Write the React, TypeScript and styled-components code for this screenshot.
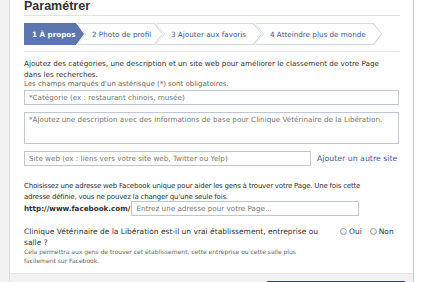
import React from "react";
import styled, { createGlobalStyle } from "styled-components";

const Global = createGlobalStyle`
  html, body { margin: 0; padding: 0; }
  body {
    background: #ffffff;
    font-family: "DejaVu Sans", "Liberation Sans", sans-serif;
    color: #333333;
    overflow: hidden;
  }
`;

const Page = styled.div`
  display: flex;
  width: 424px;
  height: 282px;
  overflow: hidden;
`;

const Gutter = styled.div`
  width: 9px;
  background: #f2f2f2;
  border-right: 1px solid #dcdcdc;
  flex: none;
`;

const Panel = styled.div`
  width: 403px;
  flex: none;
  background: #ffffff;
  border-right: 1px solid #c9c9c9;
  display: flex;
  flex-direction: column;
`;

const Content = styled.div`
  padding: 0 13px 0 14px;
  display: flex;
  flex-direction: column;
`;

const Title = styled.h1`
  margin: 0;
  font-family: "Liberation Sans", Arial, sans-serif;
  font-size: 12.5px;
  line-height: 12px;
  font-weight: bold;
  color: #333;
  padding-bottom: 3px;
  border-bottom: 1px solid #e2e2e2;
`;

const Tabs = styled.div`
  display: flex;
  margin-top: 7px;
  height: 22px;
  padding-bottom: 6px;
  border-bottom: 1px solid #e2e2e2;
`;

const chevron = (first: boolean) =>
  first
    ? "polygon(0 0, calc(100% - 8px) 0, 100% 50%, calc(100% - 8px) 100%, 0 100%)"
    : "polygon(0 0, calc(100% - 8px) 0, 100% 50%, calc(100% - 8px) 100%, 0 100%, 8px 50%)";

const TabOuter = styled.div<{ $first: boolean; $active: boolean; $w: number }>`
  width: ${(p) => p.$w}px;
  flex: none;
  height: 22px;
  padding: 1px 1px 1px ${(p) => (p.$first ? "0" : "1px")};
  box-sizing: border-box;
  margin-left: ${(p) => (p.$first ? "0" : "-7px")};
  background: ${(p) => (p.$active ? "#5b77ad" : "#d6dae1")};
  clip-path: ${(p) => chevron(p.$first)};
`;

const TabInner = styled.div<{ $first: boolean; $active: boolean }>`
  height: 20px;
  display: flex;
  align-items: center;
  padding-left: ${(p) => (p.$first ? "8px" : "14px")};
  background: ${(p) => (p.$active ? "#5b77ad" : "#ffffff")};
  clip-path: ${(p) => chevron(p.$first)};
  font-size: 7.2px;
  font-weight: ${(p) => (p.$active ? "bold" : "normal")};
  color: ${(p) => (p.$active ? "#ffffff" : "#3b5998")};
  white-space: nowrap;
`;

const Intro = styled.p`
  margin: 6px 0 0;
  width: 362px;
  font-size: 7.2px;
  line-height: 11px;
`;

const Note = styled.div`
  font-size: 7px;
  line-height: 9px;
  color: #666;
`;

const Field = styled.div<{ $h: number; $w?: string }>`
  box-sizing: border-box;
  height: ${(p) => p.$h}px;
  width: ${(p) => p.$w ?? "100%"};
  border: 1px solid #bdc7d8;
  padding: 2px 4px;
  font-size: 7.2px;
  line-height: 10px;
  color: #777;
  white-space: nowrap;
  overflow: hidden;
  flex: none;
`;

const FieldStack = styled.div`
  display: flex;
  flex-direction: column;
  gap: 7px;
  margin-top: 1px;
  width: 375px;
`;

const SiteRow = styled.div`
  display: flex;
  align-items: center;
  gap: 6px;
`;

const Link = styled.a`
  font-size: 7.8px;
  color: #3b5998;
  text-decoration: none;
  white-space: nowrap;
`;

const Section = styled.div`
  margin-top: 15px;
  width: 345px;
  font-size: 7px;
  letter-spacing: -0.2px;
  line-height: 11px;
`;

const UrlRow = styled.div`
  display: flex;
  align-items: center;
  gap: 1px;
  margin-top: -2px;
  letter-spacing: 0;
`;

const UrlPrefix = styled.span`
  font-weight: bold;
  font-size: 7.2px;
`;

const Question = styled.div`
  margin-top: 10px;
  display: flex;
  align-items: flex-start;
`;

const QText = styled.div`
  width: 298px;
  font-size: 7.5px;
  line-height: 11px;
`;

const QNote = styled.div`
  font-size: 6px;
  line-height: 8.5px;
  color: #666;
`;

const Radios = styled.div`
  margin-left: 18px;
  margin-top: 1px;
  display: flex;
  gap: 8px;
  font-size: 7.5px;
`;

const RadioLabel = styled.label`
  display: flex;
  align-items: center;
  gap: 2px;
`;

const RadioDot = styled.span`
  width: 7px;
  height: 7px;
  border-radius: 50%;
  border: 1px solid #9a9a9a;
  background: linear-gradient(#ffffff, #e6e6e6);
  box-sizing: border-box;
`;

const Footer = styled.div`
  margin-top: 8px;
  flex: 1;
  background: #f2f2f2;
  border-top: 1px solid #e2e2e2;
  display: flex;
  justify-content: flex-end;
  padding: 7px 8px 0 0;
`;

const Button = styled.div`
  width: 138px;
  height: 20px;
  background: #5b74a8;
  border: 1px solid #29447e;
  box-sizing: border-box;
`;

const tabs = [
  { label: "1 À propos", w: 60 },
  { label: "2 Photo de profil", w: 86 },
  { label: "3 Ajouter aux favoris", w: 106 },
  { label: "4 Atteindre plus de monde", w: 127 },
];

export default function App() {
  return (
    <Page>
      <Global />
      <Gutter />
      <Panel>
        <Content>
          <Title>Paramétrer</Title>
          <Tabs>
            {tabs.map((t, i) => (
              <TabOuter key={t.label} $first={i === 0} $active={i === 0} $w={t.w}>
                <TabInner $first={i === 0} $active={i === 0}>
                  {t.label}
                </TabInner>
              </TabOuter>
            ))}
          </Tabs>
          <Intro>
            Ajoutez des catégories, une description et un site web pour améliorer le
            classement de votre Page dans les recherches.
          </Intro>
          <Note>Les champs marqués d'un astérisque (*) sont obligatoires.</Note>
          <FieldStack>
            <Field $h={15}>*Catégorie (ex : restaurant chinois, musée)</Field>
            <Field $h={32}>
              *Ajoutez une description avec des informations de base pour Clinique
              Vétérinaire de la Libération.
            </Field>
            <SiteRow>
              <Field $h={15} $w="287px">
                Site web (ex : liens vers votre site web, Twitter ou Yelp)
              </Field>
              <Link href="#">Ajouter un autre site</Link>
            </SiteRow>
          </FieldStack>
          <Section>
            Choisissez une adresse web Facebook unique pour aider les gens à trouver
            votre Page. Une fois cette adresse définie, vous ne pouvez la changer
            qu'une seule fois.
            <UrlRow>
              <UrlPrefix>http://www.facebook.com/</UrlPrefix>
              <Field $h={15} $w="228px">Entrez une adresse pour votre Page...</Field>
            </UrlRow>
          </Section>
          <Question>
            <QText>
              Clinique Vétérinaire de la Libération est-il un vrai établissement,
              entreprise ou salle ?
              <QNote>
                Cela permettra aux gens de trouver cet établissement, cette entreprise
                ou cette salle plus facilement sur Facebook.
              </QNote>
            </QText>
            <Radios>
              <RadioLabel>
                <RadioDot />
                Oui
              </RadioLabel>
              <RadioLabel>
                <RadioDot />
                Non
              </RadioLabel>
            </Radios>
          </Question>
        </Content>
        <Footer>
          <Button />
        </Footer>
      </Panel>
    </Page>
  );
}
